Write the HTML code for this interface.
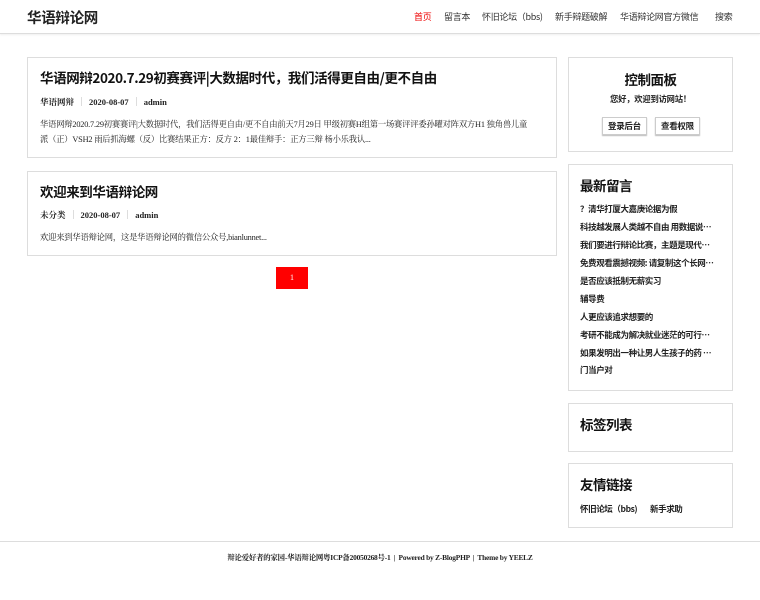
<!DOCTYPE html>
<html><head><meta charset="utf-8"><style>
*{margin:0;padding:0;box-sizing:border-box}
body{width:760px;height:600px;background:#fff;font-family:"Liberation Serif","Noto Serif CJK SC","Noto Sans CJK SC",serif;color:#222;position:relative;overflow:hidden}
.hd{position:absolute;left:0;top:0;width:760px;height:34px;border-bottom:1px solid #ddd;box-shadow:0 1px 2px #eee}
.logo{position:absolute;left:27px;top:7px;font-size:14.5px;font-weight:bold;font-family:"Noto Sans CJK SC",sans-serif;letter-spacing:-0.3px}
.nav{position:absolute;top:10px;font-size:9px;font-family:"Noto Sans CJK SC",sans-serif;color:#333;letter-spacing:-0.3px;white-space:nowrap}
.box{position:absolute;border:1px solid #ddd;background:#fff}
.t{position:absolute;font-weight:bold;font-family:"Noto Sans CJK SC",sans-serif;color:#111;white-space:nowrap}
.s{position:absolute;font-size:8.3px;color:#222;white-space:nowrap;letter-spacing:-0.2px}
.meta{position:absolute;font-size:8.5px;font-weight:bold;white-space:nowrap}
.meta i{display:inline-block;width:1px;height:9px;background:#ddd;margin:0 7px;vertical-align:-1px}
.btn{position:absolute;border:1px solid #ccc;box-shadow:0 1px 1px #bbb;font-size:8.5px;font-weight:bold;padding:2px 5px;font-family:"Noto Sans CJK SC",sans-serif;letter-spacing:-0.3px}
.li{position:absolute;left:580px;font-size:8.5px;font-weight:bold;font-family:"Noto Sans CJK SC",sans-serif;white-space:nowrap;letter-spacing:-0.4px}
</style></head><body>
<div class="hd"></div>
<div class="logo">华语辩论网</div>
<div class="nav" style="left:414px;color:#e00">首页</div>
<div class="nav" style="left:444px">留言本</div>
<div class="nav" style="left:482px">怀旧论坛（bbs)</div>
<div class="nav" style="left:555px">新手辩题破解</div>
<div class="nav" style="left:620px">华语辩论网官方微信</div>
<div class="nav" style="left:715px">搜索</div>

<div class="box" style="left:27px;top:57px;width:530px;height:101px"></div>
<div class="t" style="left:40px;top:67px;font-size:13.5px;letter-spacing:-0.4px">华语网辩2020.7.29初赛赛评|大数据时代，我们活得更自由/更不自由</div>
<div class="meta" style="left:40px;top:96px">华语网辩<i></i>2020-08-07<i></i>admin</div>
<div class="s" style="left:40px;top:118px">华语网辩2020.7.29初赛赛评|大数据时代，我们活得更自由/更不自由前天7月29日 甲级初赛H组第一场赛评评委孙曜对阵双方H1 独角兽儿童</div>
<div class="s" style="left:40px;top:133px">派（正）VSH2 雨后抓海螺（反）比赛结果正方：反方 2：1最佳辩手：正方三辩 杨小乐我认...</div>

<div class="box" style="left:27px;top:171px;width:530px;height:85px"></div>
<div class="t" style="left:40px;top:181px;font-size:13.5px;letter-spacing:-0.4px">欢迎来到华语辩论网</div>
<div class="meta" style="left:40px;top:209px">未分类<i></i>2020-08-07<i></i>admin</div>
<div class="s" style="left:40px;top:231px">欢迎来到华语辩论网，这是华语辩论网的微信公众号,bianlunnet...</div>

<div style="position:absolute;left:276px;top:267px;width:32px;height:22px;background:#f00;color:#fff;font-size:8px;text-align:center;line-height:22px">1</div>

<div class="box" style="left:568px;top:57px;width:165px;height:95px"></div>
<div class="t" style="left:568px;width:165px;text-align:center;top:69px;font-size:13.5px;letter-spacing:-0.5px">控制面板</div>
<div class="s" style="left:568px;width:165px;text-align:center;top:93px;font-weight:bold;font-family:'Noto Sans CJK SC',sans-serif">您好，欢迎到访网站！</div>
<div class="btn" style="left:602px;top:117px">登录后台</div>
<div class="btn" style="left:655px;top:117px">查看权限</div>

<div class="box" style="left:568px;top:164px;width:165px;height:227px"></div>
<div class="t" style="left:580px;top:175px;font-size:13.5px;letter-spacing:-0.5px">最新留言</div>
<div class="li" style="top:203px">？清华打厦大嘉庚论据为假</div>
<div class="li" style="top:221px">科技越发展人类越不自由 用数据说…</div>
<div class="li" style="top:239px">我们要进行辩论比赛，主题是现代…</div>
<div class="li" style="top:257px">免费观看震撼视频: 请复制这个长网…</div>
<div class="li" style="top:275px">是否应该抵制无薪实习</div>
<div class="li" style="top:293px">辅导费</div>
<div class="li" style="top:311px">人更应该追求想要的</div>
<div class="li" style="top:329px">考研不能成为解决就业迷茫的可行…</div>
<div class="li" style="top:347px">如果发明出一种让男人生孩子的药 …</div>
<div class="li" style="top:364px">门当户对</div>

<div class="box" style="left:568px;top:403px;width:165px;height:49px"></div>
<div class="t" style="left:580px;top:414px;font-size:13.5px;letter-spacing:-0.5px">标签列表</div>

<div class="box" style="left:568px;top:463px;width:165px;height:65px"></div>
<div class="t" style="left:580px;top:474px;font-size:13.5px;letter-spacing:-0.5px">友情链接</div>
<div class="li" style="top:503px">怀旧论坛（bbs)</div>
<div class="li" style="left:650px;top:503px">新手求助</div>

<div style="position:absolute;left:0;top:541px;width:760px;border-top:1px solid #ddd"></div>
<div class="s" style="left:0;width:760px;text-align:center;top:552px;font-size:7.4px;font-weight:bold;letter-spacing:-0.2px">辩论爱好者的家园-华语辩论网粤ICP备20050268号-1 &nbsp;|&nbsp; Powered by Z-BlogPHP &nbsp;|&nbsp; Theme by YEELZ</div>
</body></html>
